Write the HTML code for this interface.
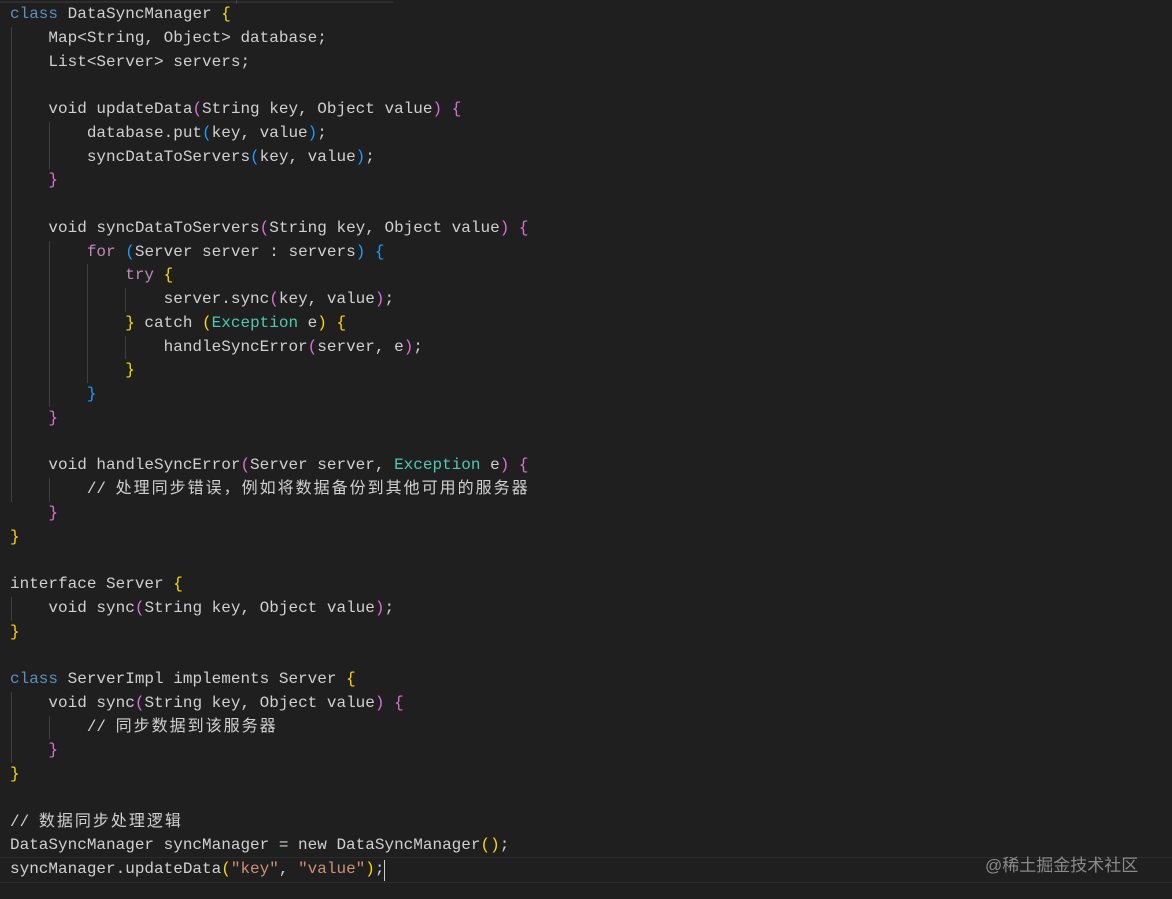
<!DOCTYPE html>
<html><head><meta charset="utf-8"><style>
html,body{margin:0;padding:0;background:#1f1f1f;width:1172px;height:899px;overflow:hidden;position:relative}
.code{position:absolute;left:10px;top:3px;font-family:"Liberation Mono","Noto Sans CJK SC",monospace;font-size:16px;line-height:23.75px;color:#d0d0d0}
.l{height:23.75px;white-space:pre;overflow:hidden}
.k{color:#5a8fc0}.p{color:#c586c0}.t{color:#4ec9b0}.s{color:#ce9178}
.b1{color:#ffd700}.b2{color:#da70d6}.b3{color:#179fff}
.cj{font-family:"Noto Sans CJK SC",sans-serif;font-size:16px;letter-spacing:2px;line-height:16px}
.g{position:absolute;width:1px;background:#404040}
</style></head><body>
<div style="position:absolute;left:0;top:1px;width:393px;height:2px;background:#2e2e2e"></div>
<div style="position:absolute;left:236px;top:0;width:1px;height:4px;background:#444"></div>
<div style="position:absolute;left:0;top:857px;width:1172px;height:1px;background:#2c2c2c"></div>
<div style="position:absolute;left:0;top:882px;width:1172px;height:1px;background:#2c2c2c"></div>
<div class="g" style="left:11px;top:26.75px;height:475px"></div>
<div class="g" style="left:11px;top:596.75px;height:23.75px"></div>
<div class="g" style="left:11px;top:691.75px;height:71.25px"></div>
<div class="g" style="left:49px;top:121.75px;height:47.5px"></div>
<div class="g" style="left:49px;top:240.5px;height:166.25px"></div>
<div class="g" style="left:49px;top:478px;height:23.75px"></div>
<div class="g" style="left:49px;top:715.5px;height:23.75px"></div>
<div class="g" style="left:87px;top:264.25px;height:118.75px"></div>
<div class="g" style="left:125px;top:288px;height:23.75px"></div>
<div class="g" style="left:125px;top:335.5px;height:23.75px"></div>
<div style="position:absolute;left:384px;top:860px;width:1px;height:21px;background:#d0d0d0"></div>
<div style="position:absolute;left:985px;top:851px;font-family:'Liberation Sans','Noto Sans CJK SC',sans-serif;font-size:17px;color:#8a8a8a">@稀土掘金技术社区</div>
<div class="code"><div class="l"><span class="k">class</span> DataSyncManager <span class="b1">{</span></div><div class="l">    Map&lt;String, Object&gt; database;</div><div class="l">    List&lt;Server&gt; servers;</div><div class="l"></div><div class="l">    void updateData<span class="b2">(</span>String key, Object value<span class="b2">)</span> <span class="b2">{</span></div><div class="l">        database.put<span class="b3">(</span>key, value<span class="b3">)</span>;</div><div class="l">        syncDataToServers<span class="b3">(</span>key, value<span class="b3">)</span>;</div><div class="l">    <span class="b2">}</span></div><div class="l"></div><div class="l">    void syncDataToServers<span class="b2">(</span>String key, Object value<span class="b2">)</span> <span class="b2">{</span></div><div class="l">        <span class="p">for</span> <span class="b3">(</span>Server server : servers<span class="b3">)</span> <span class="b3">{</span></div><div class="l">            <span class="p">try</span> <span class="b1">{</span></div><div class="l">                server.sync<span class="b2">(</span>key, value<span class="b2">)</span>;</div><div class="l">            <span class="b1">}</span> catch <span class="b1">(</span><span class="t">Exception</span> e<span class="b1">)</span> <span class="b1">{</span></div><div class="l">                handleSyncError<span class="b2">(</span>server, e<span class="b2">)</span>;</div><div class="l">            <span class="b1">}</span></div><div class="l">        <span class="b3">}</span></div><div class="l">    <span class="b2">}</span></div><div class="l"></div><div class="l">    void handleSyncError<span class="b2">(</span>Server server, <span class="t">Exception</span> e<span class="b2">)</span> <span class="b2">{</span></div><div class="l">        // <span class="cj">处理同步错误，例如将数据备份到其他可用的服务器</span></div><div class="l">    <span class="b2">}</span></div><div class="l"><span class="b1">}</span></div><div class="l"></div><div class="l">interface Server <span class="b1">{</span></div><div class="l">    void sync<span class="b2">(</span>String key, Object value<span class="b2">)</span>;</div><div class="l"><span class="b1">}</span></div><div class="l"></div><div class="l"><span class="k">class</span> ServerImpl implements Server <span class="b1">{</span></div><div class="l">    void sync<span class="b2">(</span>String key, Object value<span class="b2">)</span> <span class="b2">{</span></div><div class="l">        // <span class="cj">同步数据到该服务器</span></div><div class="l">    <span class="b2">}</span></div><div class="l"><span class="b1">}</span></div><div class="l"></div><div class="l">// <span class="cj">数据同步处理逻辑</span></div><div class="l">DataSyncManager syncManager = new DataSyncManager<span class="b1">()</span>;</div><div class="l">syncManager.updateData<span class="b1">(</span><span class="s">"key"</span>, <span class="s">"value"</span><span class="b1">)</span>;</div></div>
</body></html>
